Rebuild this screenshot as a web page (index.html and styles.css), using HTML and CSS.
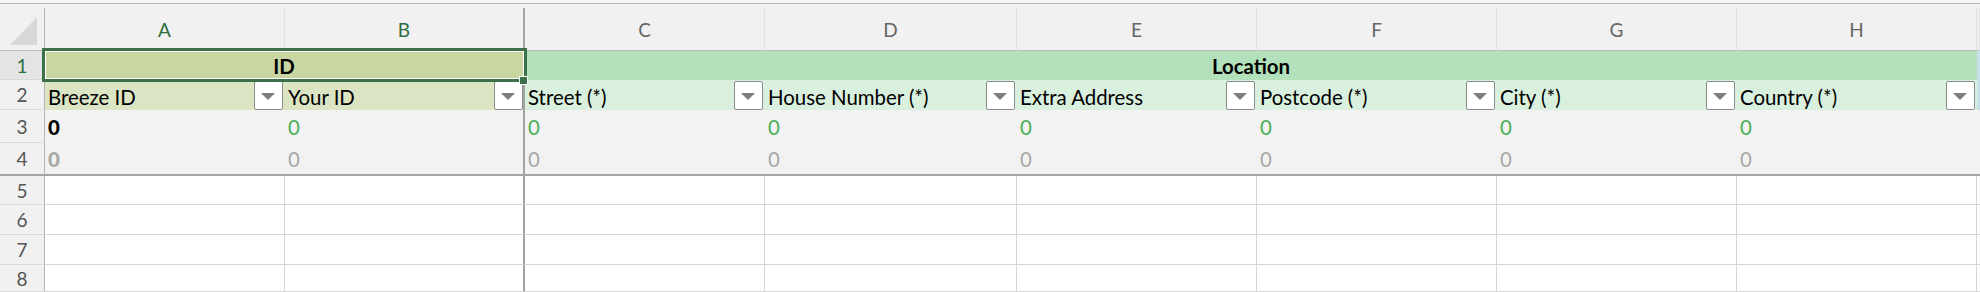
FILE: index.html
```html
<!DOCTYPE html>
<html lang="en">
<head>
  <meta charset="UTF-8">
  <title>Breeze Import Sheet</title>
  <link rel="stylesheet" href="styles.css">
</head>
<body>
  <div class="topbar"></div>

  <div class="sheet">
    <!-- column headers -->
    <div class="corner"><div class="corner-tri"></div></div>
    <div class="colhead selected">A</div>
    <div class="colhead selected freeze">B</div>
    <div class="colhead">C</div>
    <div class="colhead">D</div>
    <div class="colhead">E</div>
    <div class="colhead">F</div>
    <div class="colhead">G</div>
    <div class="colhead">H</div>
    <div class="colhead edge"></div>

    <!-- row 1: groups -->
    <div class="rowhead selected">1</div>
    <div class="group group-id freeze">ID</div>
    <div class="group group-loc">Location</div>
    <div class="edge edge-blue"></div>

    <!-- row 2: field names -->
    <div class="rowhead">2</div>
    <div class="field field-id"><span>Breeze ID</span><span class="drop"></span></div>
    <div class="field field-id freeze"><span>Your ID</span><span class="drop"></span></div>
    <div class="field field-loc"><span>Street (*)</span><span class="drop"></span></div>
    <div class="field field-loc"><span>House Number (*)</span><span class="drop"></span></div>
    <div class="field field-loc"><span>Extra Address</span><span class="drop"></span></div>
    <div class="field field-loc"><span>Postcode (*)</span><span class="drop"></span></div>
    <div class="field field-loc"><span>City (*)</span><span class="drop"></span></div>
    <div class="field field-loc"><span>Country (*)</span><span class="drop"></span></div>
    <div class="edge edge-blue"></div>

    <!-- row 3: sample values -->
    <div class="rowhead">3</div>
    <div class="data strong">0</div>
    <div class="data green freeze">0</div>
    <div class="data green">0</div>
    <div class="data green">0</div>
    <div class="data green">0</div>
    <div class="data green">0</div>
    <div class="data green">0</div>
    <div class="data green">0</div>
    <div class="data edge"></div>

    <!-- row 4: hidden values -->
    <div class="rowhead last">4</div>
    <div class="data muted strong last">0</div>
    <div class="data muted freeze last">0</div>
    <div class="data muted last">0</div>
    <div class="data muted last">0</div>
    <div class="data muted last">0</div>
    <div class="data muted last">0</div>
    <div class="data muted last">0</div>
    <div class="data muted last">0</div>
    <div class="data edge last"></div>

    <!-- rows 5-8: empty -->
    <div class="rowhead">5</div>
    <div class="cell"></div><div class="cell freeze"></div><div class="cell"></div><div class="cell"></div>
    <div class="cell"></div><div class="cell"></div><div class="cell"></div><div class="cell"></div><div class="cell edge"></div>

    <div class="rowhead">6</div>
    <div class="cell"></div><div class="cell freeze"></div><div class="cell"></div><div class="cell"></div>
    <div class="cell"></div><div class="cell"></div><div class="cell"></div><div class="cell"></div><div class="cell edge"></div>

    <div class="rowhead">7</div>
    <div class="cell"></div><div class="cell freeze"></div><div class="cell"></div><div class="cell"></div>
    <div class="cell"></div><div class="cell"></div><div class="cell"></div><div class="cell"></div><div class="cell edge"></div>

    <div class="rowhead">8</div>
    <div class="cell"></div><div class="cell freeze"></div><div class="cell"></div><div class="cell"></div>
    <div class="cell"></div><div class="cell"></div><div class="cell"></div><div class="cell"></div><div class="cell edge"></div>

    <!-- active selection on A1:B1 -->
    <div class="selection"></div>
    <div class="fill-handle"></div>
  </div>
</body>
</html>
```

FILE: styles.css
```css
body {
  margin: 0;
  padding: 0;
  background-color: #fff;
  font-family: Lato, "Liberation Sans", sans-serif;
  font-size: 20.4px;
  color: #000;
  overflow: hidden;
}

.topbar {
  height: 8px;
  background: linear-gradient(#f8f8f8 0 3px, #b5b5b5 3px 4px, #f1f1f1 4px);
}

/* Sheet grid */
.sheet {
  position: relative;
  display: grid;
  grid-template-columns: 45px 240px 240px 240px 252px 240px 240px 240px 240px 3px;
  grid-template-rows: 43px 29px 30px 33px 33px 29px 30px 30px 27px;
}

.sheet > div {
  box-sizing: border-box;
  min-width: 0;
}

.corner {
  position: relative;
  background-color: #f1f1f1;
  border-right: 1px solid #b4b4b4;
  border-bottom: 1px solid #bcbcbc;
}

.corner-tri {
  position: absolute;
  left: 10px;
  top: 9px;
  width: 0;
  height: 0;
  border-left: 27px solid transparent;
  border-bottom: 28px solid #d8d8d8;
}

.colhead {
  display: flex;
  align-items: center;
  justify-content: center;
  background-color: #f1f1f1;
  border-right: 1px solid #dedede;
  border-bottom: 1px solid #bcbcbc;
  color: #666;
  font-size: 19px;
}

.colhead.selected {
  color: #2f6e3f;
}

.rowhead {
  display: flex;
  align-items: center;
  justify-content: center;
  background-color: #f1f1f1;
  border-right: 1px solid #b4b4b4;
  border-bottom: 1px solid #dadada;
  color: #555;
  font-size: 19px;
}

.rowhead.selected {
  background-color: #e4e4e4;
  color: #2f6e3f;
}

.freeze {
  border-right: 2px solid #a4a4a4 !important;
}

/* Row 1 groups */
.group {
  display: flex;
  align-items: center;
  justify-content: center;
  font-weight: bold;
}

.group-id {
  grid-column: span 2;
  background-color: #c9d6a1;
}

.group-loc {
  grid-column: span 6;
  background-color: #b3e1bb;
}

/* Row 2 field names */
.field {
  display: flex;
  align-items: center;
  justify-content: space-between;
  padding-left: 3px;
  padding-right: 2px;
  white-space: nowrap;
}

.field span:first-child {
  padding-top: 3px;
}

.field-id {
  background-color: #dce5c3;
}

.field-loc {
  background-color: #daf0de;
}

.field.freeze {
  padding-right: 0;
}

.drop {
  position: relative;
  width: 29px;
  height: 29px;
  box-sizing: border-box;
  background-color: #fff;
  border: 1px solid #8c8c8c;
  border-radius: 2px;
}

.drop::after {
  content: "";
  position: absolute;
  left: 6px;
  top: 11px;
  border-left: 7px solid transparent;
  border-right: 7px solid transparent;
  border-top: 7px solid #7d7d7d;
}

.edge {
  background-color: #f1f1f1;
  border-bottom: 1px solid #bcbcbc;
}

.edge-blue {
  background-color: #c6e1e9;
  border-bottom: none;
}

/* Rows 3-4 sample values */
.data {
  display: flex;
  align-items: center;
  padding-left: 3px;
  background-color: #f2f2f2;
}

.data.green {
  color: #4caf59;
}

.data.muted {
  color: #a8a8a8;
}

.data.strong {
  font-weight: 900;
}

.last {
  border-bottom: 2px solid #a4a4a4 !important;
}

.data.edge {
  background-color: #f2f2f2;
  border-bottom: none;
}

/* Empty cells */
.cell {
  border-right: 1px solid #d6d6d6;
  border-bottom: 1px solid #d6d6d6;
}

.cell.edge {
  background-color: #fff;
  border-right: none;
}

/* Active cell */
.selection {
  position: absolute;
  left: 42px;
  top: 40px;
  width: 485px;
  height: 34px;
  box-sizing: border-box;
  border: 3px solid #3b7049;
  box-shadow: inset 0 0 0 1px #fff;
  pointer-events: none;
}

.fill-handle {
  position: absolute;
  left: 519px;
  top: 68px;
  width: 9px;
  height: 9px;
  box-sizing: border-box;
  background-color: #3b7049;
  border: 1px solid #fff;
}
```
